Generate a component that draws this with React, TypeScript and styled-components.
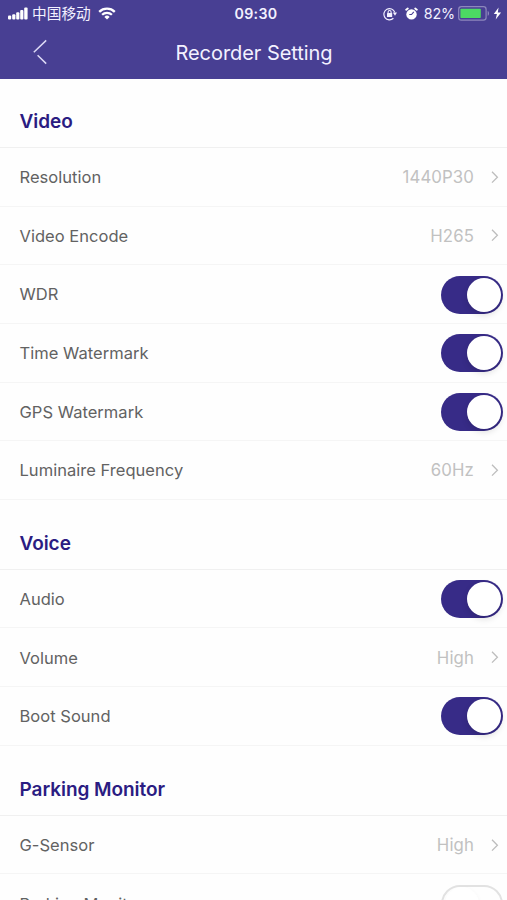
import React from "react";
import styled, { createGlobalStyle } from "styled-components";

const Global = createGlobalStyle`
  *, *::before, *::after { box-sizing: border-box; }
  html, body { margin: 0; height: 100%; overflow: hidden; background: #fefefe; }
  body { font-family: Inter, "Noto Sans CJK SC", sans-serif; }
`;

const Screen = styled.div`
  height: 900px;
  overflow: hidden;
  background: #fefefe;
`;

const Header = styled.header`
  height: 79px;
  background: #483f93;
  color: #f3f1ff;
`;

const StatusBar = styled.div`
  display: grid;
  grid-template-columns: 1fr auto 1fr;
  align-items: center;
  height: 27px;
  padding: 0 5px 0 8px;
`;

const StatusGroup = styled.div<{ $end?: boolean }>`
  display: flex;
  align-items: center;
  justify-content: ${(p) => (p.$end ? "flex-end" : "flex-start")};
  svg { display: block; flex: none; }
`;

const Carrier = styled.span`
  margin: -1px 7px 1px 4px;
  font: 400 14.7px/20px "Noto Sans CJK SC", sans-serif;
`;

const Clock = styled.time`
  padding-left: 2px;
  font-size: 14.2px;
  font-weight: 600;
  line-height: 20px;
  letter-spacing: 0.3px;
`;

const Percent = styled.span`
  margin: 0 3px 0 6px;
  font-size: 14.3px;
  line-height: 20px;
  letter-spacing: -0.1px;
`;

const StatusIcons = styled.span`
  display: flex;
  align-items: center;
  gap: 8px;
`;

const Power = styled.span`
  display: flex;
  align-items: center;
  gap: 3px;
`;

const NavBar = styled.div`
  display: grid;
  grid-template-columns: 80px 1fr 80px;
  align-items: center;
  height: 52px;
`;

const BackButton = styled.button`
  display: flex;
  width: 48px;
  height: 44px;
  padding: 8px 0 0 33px;
  border: 0;
  background: none;
  color: #dcd9f5;
`;

const Title = styled.h1`
  margin: 0;
  padding-left: 1px;
  text-align: center;
  font-size: 20px;
  font-weight: 400;
  line-height: 28px;
  letter-spacing: -0.05px;
`;

const SectionTitle = styled.h2<{ $first?: boolean }>`
  display: flex;
  align-items: center;
  height: ${(p) => (p.$first ? 69 : 70)}px;
  margin: 0;
  padding: ${(p) => (p.$first ? 18 : 19)}px 19.5px 0;
  border-bottom: 1.5px solid #f0f0f0;
  color: #2b1c82;
  font-size: 19px;
  font-weight: 600;
  line-height: 24px;
  letter-spacing: -0.05px;
`;

const Row = styled.div`
  display: flex;
  align-items: center;
  height: 58.65px;
  padding-left: 19.5px;
  border-bottom: 1.5px solid #f5f5f5;
`;

const Label = styled.span`
  flex: 1;
  padding-top: 0.6px;
  color: #626262;
  font-size: 16.5px;
  line-height: 24px;
  letter-spacing: 0.03px;
`;

const Value = styled.span`
  margin-right: 16px;
  padding-top: 0.6px;
  color: #c1c1c1;
  font-size: 16.8px;
  line-height: 24px;
  letter-spacing: 0.1px;
`;

const Chevron = styled.svg`
  display: block;
  width: 10px;
  height: 14px;
  margin-right: 7px;
`;

const Switch = styled.button<{ $on: boolean }>`
  display: flex;
  justify-content: ${(p) => (p.$on ? "flex-end" : "flex-start")};
  align-items: center;
  width: 62px;
  height: 38px;
  margin: 1px 4px 0 0;
  padding: 0 2px;
  border: ${(p) => (p.$on ? "0" : "2px solid #e2e2e2")};
  border-radius: 20px;
  background: ${(p) => (p.$on ? "#372b87" : "#fefefe")};
`;

const Knob = styled.span<{ $on: boolean }>`
  width: 34px;
  height: 34px;
  border-radius: 50%;
  background: #fff;
  box-shadow: ${(p) => (p.$on ? "0 3px 6px rgba(0,0,0,.13)" : "0 2px 5px rgba(0,0,0,.05)")};
`;

type Item = { label: string; value?: string; on?: boolean };

const sections: { title: string; items: Item[] }[] = [
  {
    title: "Video",
    items: [
      { label: "Resolution", value: "1440P30" },
      { label: "Video Encode", value: "H265" },
      { label: "WDR", on: true },
      { label: "Time Watermark", on: true },
      { label: "GPS Watermark", on: true },
      { label: "Luminaire Frequency", value: "60Hz" },
    ],
  },
  {
    title: "Voice",
    items: [
      { label: "Audio", on: true },
      { label: "Volume", value: "High" },
      { label: "Boot Sound", on: true },
    ],
  },
  {
    title: "Parking Monitor",
    items: [
      { label: "G-Sensor", value: "High" },
      { label: "Parking Monitor", on: false },
    ],
  },
];

const SignalIcon = () => (
  <svg width="20" height="13" viewBox="0 0 20 13" fill="#fff">
    <rect x="0" y="8.5" width="3.2" height="4" rx="1" />
    <rect x="4.2" y="7.2" width="3.2" height="5.3" rx="1" />
    <rect x="8.2" y="5.3" width="3.2" height="7.2" rx="1" />
    <rect x="12.2" y="3" width="3.2" height="9.5" rx="1" />
    <rect x="16.2" y="0.5" width="3.4" height="12" rx="1" />
  </svg>
);

const WifiIcon = () => (
  <svg width="18" height="13" viewBox="0 0 18 13" fill="none" stroke="#fff" strokeWidth="2.3">
    <path d="M1.2 4.8a11.2 11.2 0 0 1 15.6 0" />
    <path d="M4.1 7.8a7 7 0 0 1 9.8 0" />
    <path d="M9 12.5 6.4 9.9a3.7 3.7 0 0 1 5.2 0z" fill="#fff" stroke="none" />
  </svg>
);

const RotationLockIcon = () => (
  <svg width="14" height="14" viewBox="0 0 14 14" fill="none" stroke="#f3f1ff">
    <path d="M10.4 11.3A5.6 5.6 0 1 1 11.8 5.4" strokeWidth="1.2" />
    <path d="M9.8 5.6h4.2l-2 3.2z" fill="#f3f1ff" stroke="none" />
    <rect x="4" y="6" width="5.2" height="4" rx=".5" fill="#f3f1ff" stroke="none" />
    <path d="M5.1 6.3V5a1.5 1.5 0 0 1 3 0v1.3" strokeWidth="1.1" />
  </svg>
);

const AlarmIcon = () => (
  <svg width="13" height="14" viewBox="0 0 13 14" fill="none">
    <circle cx="6.5" cy="7.4" r="5.2" fill="#fff" />
    <path d="m1.2 2.7 1.6-1.2M11.8 2.7l-1.6-1.2" stroke="#fff" strokeWidth="1.9" strokeLinecap="round" />
    <path d="M8.8 4.9 6.5 7.5H4.3" stroke="#483f93" strokeWidth="1.1" />
  </svg>
);

const BatteryIcon = () => (
  <svg width="32" height="15" viewBox="0 0 32 15" fill="none">
    <rect x=".7" y=".7" width="27.4" height="13.4" rx="2.7" stroke="#8d87bd" strokeWidth="1.2" />
    <rect x="2.4" y="2.7" width="20.4" height="9.4" rx=".8" fill="#4cda63" />
    <path d="M29.7 5c1.8.5 1.8 4.3 0 4.8z" fill="#8d87bd" />
  </svg>
);

const BoltIcon = () => (
  <svg width="9" height="13" viewBox="0 0 9 13" fill="#fff">
    <path d="M5.6.6.8 7h3.1l-1.2 5.5L8.1 5.4H4.8z" />
  </svg>
);

export default function App() {
  return (
    <>
      <Global />
      <Screen>
        <Header>
          <StatusBar>
            <StatusGroup>
              <SignalIcon />
              <Carrier>中国移动</Carrier>
              <WifiIcon />
            </StatusGroup>
            <Clock>09:30</Clock>
            <StatusGroup $end>
              <StatusIcons>
                <RotationLockIcon />
                <AlarmIcon />
              </StatusIcons>
              <Percent>82%</Percent>
              <Power>
                <BatteryIcon />
                <BoltIcon />
              </Power>
            </StatusGroup>
          </StatusBar>
          <NavBar>
            <BackButton aria-label="Back">
              <svg width="15" height="27" viewBox="0 0 15 27" fill="none" stroke="currentColor" strokeWidth="1.5">
                <path d="M13.2 1.4.8 13.2M4.6 16.2l8.6 8.4" />
              </svg>
            </BackButton>
            <Title>Recorder Setting</Title>
          </NavBar>
        </Header>
        {sections.map((section, index) => (
          <section key={section.title}>
            <SectionTitle $first={index === 0}>{section.title}</SectionTitle>
            {section.items.map((item) => (
              <Row key={item.label}>
                <Label>{item.label}</Label>
                {item.value !== undefined ? (
                  <>
                    <Value>{item.value}</Value>
                    <Chevron viewBox="0 0 10 14" fill="none" stroke="#bdbdbd" strokeWidth="1.3">
                      <path d="m2 1.8 5.4 5.4L2 12.6" />
                    </Chevron>
                  </>
                ) : (
                  <Switch $on={!!item.on} role="switch" aria-checked={!!item.on} aria-label={item.label}>
                    <Knob $on={!!item.on} />
                  </Switch>
                )}
              </Row>
            ))}
          </section>
        ))}
      </Screen>
    </>
  );
}
